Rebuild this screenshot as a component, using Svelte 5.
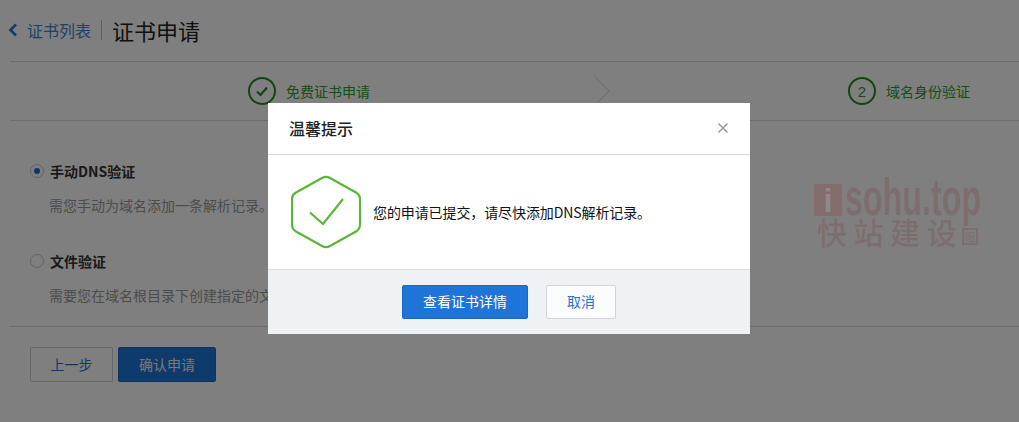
<script>
	const options = [
		{ label: '手动DNS验证', desc: '需您手动为域名添加一条解析记录。', checked: true },
		{ label: '文件验证', desc: '需要您在域名根目录下创建指定的文件，完成域名身份验证。', checked: false }
	]
</script>

<div class="page">
	<header class="head">
		<svg class="back" width="10" height="14" viewBox="0 0 10 14"><path d="M8 1.500 2.500 7 8 12.500" fill="none" stroke="#2a7ad6" stroke-width="2.600" /></svg>
		<a class="crumb" href="#list">证书列表</a>
		<span class="sep"></span>
		<h1>证书申请</h1>
	</header>

	<div class="steps">
		<div class="step">
			<span class="circle">
				<svg width="14" height="12" viewBox="0 0 14 12"><path d="M2 6.500 5.500 10 12 2.500" fill="none" stroke="#1f8f1f" stroke-width="2.200" /></svg>
			</span>
			免费证书申请
		</div>
		<svg class="arrow" width="16" height="30" viewBox="0 0 16 30"><path d="M1 1 15 15 1 29" fill="none" stroke="#d5d5d5" stroke-width="1" /></svg>
		<div class="step">
			<span class="circle">2</span>
			域名身份验证
		</div>
	</div>

	<div class="options">
		{#each options as opt}
			<div class="option">
				<div class="label-row">
					<span class="radio" class:checked={opt.checked}></span>
					<strong>{opt.label}</strong>
				</div>
				<p>{opt.desc}</p>
			</div>
		{/each}
	</div>

	<div class="actions">
		<button class="prev">上一步</button>
		<button class="confirm">确认申请</button>
	</div>
</div>

<div class="overlay">
	<div class="modal">
		<div class="modal-head">
			<span>温馨提示</span>
			<svg width="10" height="10" viewBox="0 0 10 10"><path d="M.5.5l9 9M9.500.5l-9 9" stroke="#8f8f8f" stroke-width="1.300" /></svg>
		</div>
		<div class="modal-body">
			<svg width="70" height="74" viewBox="0 0 70 74">
				<path d="M31 3Q35 .8 39 3L65 17.500Q69 20 69 24V50Q69 54 65 56.500L39 71Q35 73.200 31 71L5 56.500Q1 54 1 50V24Q1 20 5 17.500Z" fill="none" stroke="#5ab638" stroke-width="2.200" />
				<path d="M19 37.500 32 49 52 24" fill="none" stroke="#5ab638" stroke-width="2.200" />
			</svg>
			<span class="msg">您的申请已提交，请尽快添加DNS解析记录。</span>
		</div>
		<div class="modal-foot">
			<button class="primary">查看证书详情</button>
			<button class="cancel">取消</button>
		</div>
	</div>
</div>

<div class="mark">
	<div class="mark-top"><span class="mark-i">i</span><span class="mark-word">sohu.top</span></div>
	<div class="mark-cn"><span class="mark-chars">快站建设</span><span class="mark-box">图</span></div>
</div>

<style>
	:global(body) {
		margin: 0;
		background: #fff;
		overflow: hidden;
	}

	.page {
		height: 422px;
		padding-left: 10px;
		box-sizing: border-box;
		font-family: 'Noto Sans CJK SC', 'Liberation Sans', sans-serif;
		color: #333;
		overflow: hidden;
	}

	.head {
		height: 59px;
		padding-bottom: 2px;
		display: flex;
		align-items: center;
		border-bottom: 1px solid #d8d8d8;
	}

	.back {
		margin-left: -2px;
		margin-right: 9px;
	}

	.crumb {
		font-size: 16px;
		color: #3c83d6;
		text-decoration: none;
	}

	.sep {
		width: 1px;
		height: 20px;
		background: #bbb;
		margin: 0 10px;
	}

	h1 {
		margin: 0;
		font-size: 22px;
		font-weight: 400;
		color: #222;
	}

	.steps {
		height: 58px;
		padding-left: 238px;
		display: flex;
		align-items: center;
		border-bottom: 1px solid #d8d8d8;
	}

	.step {
		display: flex;
		align-items: center;
		gap: 10px;
		font-size: 14px;
		color: #2f9a2f;
		white-space: nowrap;
	}

	.circle {
		width: 28px;
		height: 28px;
		box-sizing: border-box;
		border: 2px solid #1f8f1f;
		border-radius: 50%;
		display: flex;
		align-items: center;
		justify-content: center;
		font-size: 15px;
		font-family: 'Liberation Sans', sans-serif;
	}

	.arrow {
		margin: 0 238px 0 224px;
	}

	.options {
		padding: 34px 0 0 20px;
		height: 206px;
		box-sizing: border-box;
		border-bottom: 1px solid #d8d8d8;
	}

	.option {
		height: 91px;
	}

	.label-row {
		display: flex;
		align-items: center;
		gap: 6px;
		height: 34px;
		margin-top: -1px;
	}

	.label-row strong {
		font-size: 14px;
		font-weight: 700;
		color: #333;
	}

	.radio {
		width: 14px;
		height: 14px;
		box-sizing: border-box;
		border: 1px solid #c4c4c4;
		border-radius: 50%;
		background: #fff;
		display: flex;
		align-items: center;
		justify-content: center;
	}

	.radio.checked::after {
		content: '';
		width: 6px;
		height: 6px;
		border-radius: 50%;
		background: #1a6fd0;
	}

	.option p {
		margin: 6px 0 0 19px;
		font-size: 14px;
		line-height: 22px;
		color: #999;
		white-space: nowrap;
	}

	.actions {
		padding: 20px 0 0 20px;
		display: flex;
		gap: 5px;
	}

	button {
		height: 35px;
		box-sizing: border-box;
		font-family: inherit;
		font-size: 14px;
		border-radius: 2px;
		padding: 0 0 2px;
	}

	.prev {
		width: 83px;
		background: #fff;
		border: 1px solid #c8ccd0;
		color: #2a6fc8;
	}

	.confirm {
		width: 98px;
		background: #1e74d8;
		border: 1px solid #1a68c4;
		color: #f0f0f0;
	}

	.overlay {
		position: fixed;
		inset: 0;
		background: rgba(0, 0, 0, 0.5);
		display: flex;
		justify-content: center;
		align-items: flex-start;
		padding-top: 103px;
		box-sizing: border-box;
		font-family: 'Noto Sans CJK SC', 'Liberation Sans', sans-serif;
	}

	.modal {
		width: 482px;
		height: 231px;
		margin-right: 1px;
		background: #fff;
		display: flex;
		flex-direction: column;
	}

	.modal-head {
		height: 52px;
		box-sizing: border-box;
		padding: 0 22px 2px 21px;
		display: flex;
		align-items: center;
		justify-content: space-between;
		border-bottom: 1px solid #d9d9d9;
		font-size: 16px;
		font-weight: 500;
		color: #222;
	}

	.modal-body {
		height: 114px;
		box-sizing: border-box;
		padding-left: 23px;
		display: flex;
		align-items: center;
		gap: 12px;
	}

	.msg {
		font-size: 14px;
		letter-spacing: -0.1px;
		color: #111;
		margin-top: -1px;
		white-space: nowrap;
	}

	.modal-foot {
		flex: 1;
		background: #eff2f5;
		border-top: 1px solid #d9dce0;
		display: flex;
		justify-content: center;
		align-items: flex-start;
		gap: 18px;
		padding-top: 15px;
	}

	.primary,
	.cancel {
		height: 34px;
	}

	.primary {
		width: 126px;
		background: #1e74d8;
		border: 1px solid #1a68c4;
		color: #fff;
	}

	.cancel {
		width: 70px;
		background: #fbfcfd;
		border: 1px solid #cfd4da;
		color: #2a6fc8;
	}

	.mark {
		position: absolute;
		left: 814px;
		top: 174px;
		width: 170px;
		color: rgba(125, 90, 90, 0.45);
		font-family: 'Liberation Sans', 'Noto Sans CJK SC', sans-serif;
	}

	.mark-top {
		height: 45px;
		display: flex;
		align-items: flex-start;
	}

	.mark-i {
		flex: none;
		width: 28px;
		height: 32px;
		margin-top: 10px;
		margin-right: 3px;
		background: rgba(135, 95, 95, 0.6);
		color: #8f8a8a;
		display: flex;
		align-items: center;
		justify-content: center;
		font-size: 34px;
		font-weight: 700;
	}

	.mark-word {
		font-size: 52px;
		font-weight: 700;
		line-height: 46px;
		white-space: nowrap;
		transform: scaleX(0.62);
		transform-origin: left top;
	}

	.mark-cn {
		display: flex;
		align-items: flex-start;
		font-family: 'Noto Sans CJK SC', sans-serif;
		white-space: nowrap;
	}

	.mark-chars {
		margin-left: 3px;
		font-size: 30px;
		line-height: 24px;
		height: 24px;
		font-weight: 500;
		letter-spacing: 6.5px;
	}

	.mark-box {
		width: 16px;
		height: 17px;
		box-sizing: border-box;
		border: 2px solid rgba(125, 90, 90, 0.45);
		font-size: 10px;
		line-height: 13px;
		text-align: center;
		margin-left: -1px;
		margin-top: 9px;
	}
</style>
